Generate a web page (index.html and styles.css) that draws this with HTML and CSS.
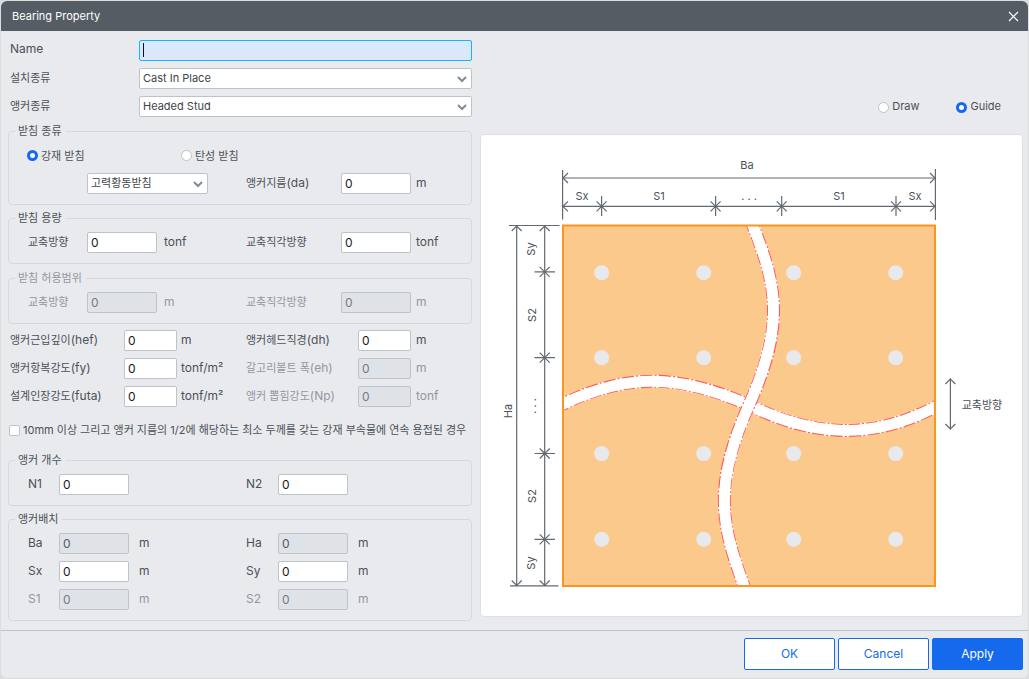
FILE: index.html
```html
<!DOCTYPE html>
<html lang="ko">
<head>
<meta charset="utf-8">
<title>Bearing Property</title>
<link rel="stylesheet" href="styles.css">
</head>
<body>
<form class="dialog">
  <header class="titlebar">
    <h1 class="title">Bearing Property</h1>
    <button class="close" type="button" aria-label="Close">
      <svg width="11" height="11" viewBox="0 0 11 11"><path d="M1 1l9 9M10 1l-9 9" fill="none" stroke="#fff" stroke-width="1.2"/></svg>
    </button>
  </header>

  <main class="content">
    <div class="form">
      <div class="rows top-rows">
        <label for="name">Name</label><input class="field name-field" id="name" type="text">
        <label class="ko" for="install">설치종류</label>
        <select class="field" id="install"><option>Cast In Place</option></select>
        <label class="ko" for="anchor">앵커종류</label>
        <select class="field" id="anchor"><option>Headed Stud</option></select>
      </div>

      <fieldset class="group">
        <legend class="ko">받침 종류</legend>
        <div class="radio-row">
          <label class="choice ko"><input type="radio" name="kind" checked><span>강재 받침</span></label>
          <label class="choice ko"><input type="radio" name="kind"><span>탄성 받침</span></label>
        </div>
        <div class="rows bearing-rows">
          <select class="field ko span-unit" aria-label="받침 종류"><option>고력황동받침</option></select>
          <label for="da"><span class="ko">앵커지름</span>(da)</label><input class="field" id="da" value="0"><span>m</span>
        </div>
      </fieldset>

      <fieldset class="group">
        <legend class="ko">받침 용량</legend>
        <div class="rows bearing-rows">
          <label class="ko" for="cap1">교축방향</label><input class="field" id="cap1" value="0"><span class="unit">tonf</span>
          <label class="ko" for="cap2">교축직각방향</label><input class="field" id="cap2" value="0"><span>tonf</span>
        </div>
      </fieldset>

      <fieldset class="group range-group" disabled>
        <legend class="ko">받침 허용범위</legend>
        <div class="rows bearing-rows">
          <label class="ko" for="rng1">교축방향</label><input class="field" id="rng1" value="0"><span class="unit">m</span>
          <label class="ko" for="rng2">교축직각방향</label><input class="field" id="rng2" value="0"><span>m</span>
        </div>
      </fieldset>

      <div class="rows strength-rows">
        <label for="hef"><span class="ko">앵커근입깊이</span>(hef)</label><input class="field" id="hef" value="0"><span class="unit">m</span>
        <label for="dh"><span class="ko">앵커헤드직경</span>(dh)</label><input class="field" id="dh" value="0"><span>m</span>
        <label for="fy"><span class="ko">앵커항복강도</span>(fy)</label><input class="field" id="fy" value="0"><span class="unit">tonf/m²</span>
        <label class="off" for="eh"><span class="ko">갈고리볼트 폭</span>(eh)</label><input class="field" id="eh" value="0" disabled><span class="off">m</span>
        <label for="futa"><span class="ko">설계인장강도</span>(futa)</label><input class="field" id="futa" value="0"><span class="unit">tonf/m²</span>
        <label class="off" for="np"><span class="ko">앵커 뽑힘강도</span>(Np)</label><input class="field" id="np" value="0" disabled><span class="off">tonf</span>
      </div>

      <label class="check"><input type="checkbox"><span>10mm <span class="ko">이상 그리고 앵커 지름의</span> 1/2<span class="ko">에 해당하는 최소 두께를 갖는 강재 부속물에 연속 용접된 경우</span></span></label>

      <fieldset class="group">
        <legend class="ko">앵커 개수</legend>
        <div class="rows anchor-rows">
          <label for="n1">N1</label><input class="field" id="n1" value="0"><span></span>
          <label for="n2">N2</label><input class="field" id="n2" value="0"><span></span>
        </div>
      </fieldset>

      <fieldset class="group">
        <legend class="ko">앵커배치</legend>
        <div class="rows anchor-rows">
          <label for="ba">Ba</label><input class="field computed" id="ba" value="0" readonly><span class="unit">m</span>
          <label for="ha">Ha</label><input class="field computed" id="ha" value="0" readonly><span class="unit">m</span>
          <label for="sx">Sx</label><input class="field" id="sx" value="0"><span class="unit">m</span>
          <label for="sy">Sy</label><input class="field" id="sy" value="0"><span class="unit">m</span>
          <label class="off" for="s1">S1</label><input class="field" id="s1" value="0" disabled><span class="unit off">m</span>
          <label class="off" for="s2">S2</label><input class="field" id="s2" value="0" disabled><span class="unit off">m</span>
        </div>
      </fieldset>
    </div>

    <section class="preview">
      <div class="view-switch">
        <label class="choice"><input type="radio" name="view"><span>Draw</span></label>
        <label class="choice"><input type="radio" name="view" checked><span>Guide</span></label>
      </div>
      <div class="panel">
        <svg class="diagram" viewBox="481 135 541 481" role="img" aria-label="Anchor layout guide">
          <defs>
            <clipPath id="plate"><rect x="563" y="225" width="372" height="361"/></clipPath>
            <path id="wave-h" d="M555 408L563 404C628 373 678 374 749 405C813 437 872 440 935 407L943 403"/>
            <path id="wave-v" d="M750 218L753 226C777 286 785 325 749 405C712 487 722 526 744 586L747 594"/>
            <path id="cross-x" d="M-5 -5L5 5M5 -5L-5 5"/>
            <path id="head" d="M5 -5L0 0L5 5"/>
          </defs>
          <rect x="563" y="225.5" width="372" height="360.5" fill="#fac98b"/>
          <g clip-path="url(#plate)" fill="none">
            <use href="#wave-h" stroke="#fff" stroke-width="13"/>
            <use href="#wave-h" stroke="#ff5a50" stroke-width="13" stroke-dasharray="12 2 2 2"/>
            <use href="#wave-h" stroke="#fff" stroke-width="11"/>
            <use href="#wave-v" stroke="#fff" stroke-width="13"/>
            <use href="#wave-v" stroke="#ff5a50" stroke-width="13" stroke-dasharray="12 2 2 2"/>
            <use href="#wave-v" stroke="#fff" stroke-width="11"/>
          </g>
          <rect x="563" y="225.5" width="372" height="360.5" fill="none" stroke="#fa961e" stroke-width="2"/>
          <g fill="#e8e9ed">
            <circle cx="601.7" cy="272.8" r="7.5"/><circle cx="703.7" cy="272.8" r="7.5"/><circle cx="793.7" cy="272.8" r="7.5"/><circle cx="895.7" cy="272.8" r="7.5"/>
            <circle cx="601.7" cy="357.7" r="7.5"/><circle cx="703.7" cy="357.7" r="7.5"/><circle cx="793.7" cy="357.7" r="7.5"/><circle cx="895.7" cy="357.7" r="7.5"/>
            <circle cx="601.7" cy="453.6" r="7.5"/><circle cx="703.7" cy="453.6" r="7.5"/><circle cx="793.7" cy="453.6" r="7.5"/><circle cx="895.7" cy="453.6" r="7.5"/>
            <circle cx="601.7" cy="539.3" r="7.5"/><circle cx="703.7" cy="539.3" r="7.5"/><circle cx="793.7" cy="539.3" r="7.5"/><circle cx="895.7" cy="539.3" r="7.5"/>
          </g>
          <g class="dims">
            <path d="M562.6 170V219.5M935.4 169V220M563 178H935M563 206.3H935"/>
            <path d="M601.6 196V216M715.6 196V216M781.7 196V216M896 196V216"/>
            <path d="M509 225.5H559.5M510 585.8H558.5M516.7 226V585.5M544.7 226V585.5"/>
            <path d="M534.5 271.8H555M534.5 357.7H555M534.5 453.5H555M534.5 539.3H555"/>
            <path d="M950.4 378.5V429.5"/>
            <use href="#cross-x" x="601.6" y="206.3"/><use href="#cross-x" x="715.6" y="206.3"/><use href="#cross-x" x="781.7" y="206.3"/><use href="#cross-x" x="896" y="206.3"/>
            <use href="#cross-x" x="544.7" y="271.8"/><use href="#cross-x" x="544.7" y="357.7"/><use href="#cross-x" x="544.7" y="453.5"/><use href="#cross-x" x="544.7" y="539.3"/>
            <use href="#head" x="563" y="178"/><use href="#head" x="563" y="206.3"/>
            <use href="#head" transform="translate(935 178) rotate(180)"/><use href="#head" transform="translate(935 206.3) rotate(180)"/>
            <use href="#head" transform="translate(516.7 226) rotate(90)"/><use href="#head" transform="translate(544.7 226) rotate(90)"/>
            <use href="#head" transform="translate(516.7 585.5) rotate(-90)"/><use href="#head" transform="translate(544.7 585.5) rotate(-90)"/>
            <use href="#head" transform="translate(950.4 379) rotate(90)"/><use href="#head" transform="translate(950.4 429) rotate(-90)"/>
          </g>
          <g class="dim-text">
            <text x="747" y="169">Ba</text>
            <text x="582" y="200">Sx</text><text x="659" y="200">S1</text><text x="749" y="200">. . .</text><text x="839" y="200">S1</text><text x="915" y="200">Sx</text>
            <text transform="translate(535 249) rotate(-90)">Sy</text>
            <text transform="translate(536 315) rotate(-90)">S2</text>
            <text transform="translate(536 406) rotate(-90)">. . .</text>
            <text transform="translate(536 496) rotate(-90)">S2</text>
            <text transform="translate(535 563) rotate(-90)">Sy</text>
            <text transform="translate(512 411) rotate(-90)">Ha</text>
            <text class="ko" x="982" y="409">교축방향</text>
          </g>
        </svg>
      </div>
    </section>
  </main>

  <footer class="actions">
    <button class="btn" type="button">OK</button>
    <button class="btn" type="button">Cancel</button>
    <button class="btn primary" type="button">Apply</button>
  </footer>
</form>
</body>
</html>
```
FILE: styles.css
```css
* { box-sizing: border-box; }

body {
  margin: 0;
  min-height: 100vh;
  padding: 1px;
  display: flex;
  background: #dcdddf;
  color: #4b5157;
  font: 12px/16px Inter, "Noto Sans CJK KR", sans-serif;
}

.ko { font-family: "Noto Sans CJK KR", sans-serif; font-size: 11px; }

.dialog {
  flex: 1;
  display: flex;
  flex-direction: column;
  background: #e9eaee;
  border-radius: 6px;
  overflow: hidden;
}

.titlebar {
  display: flex;
  align-items: center;
  justify-content: space-between;
  height: 30px;
  padding: 0 9px 0 11px;
  background: #565c63;
}
.title { margin: 0; font-size: 11px; font-weight: 400; color: #fff; }
.close { display: flex; padding: 0; border: 0; background: none; }

.content {
  flex: 1;
  display: grid;
  grid-template-columns: 464px 1fr;
  gap: 8px;
  padding: 9px 5px 9px 7px;
}

.form { display: flex; flex-direction: column; gap: 6px; }

.rows {
  display: grid;
  row-gap: 7px;
  grid-auto-rows: 21px;
  align-items: center;
  white-space: nowrap;
}
.rows label, .rows span { padding-bottom: 2px; }
.rows label.ko, .top-rows label { padding-bottom: 4px; }
.rows label > span { padding: 0; }

.top-rows { grid-template-columns: 129px 1fr; padding-left: 2px; margin-bottom: 1px; }
.bearing-rows { grid-template-columns: 59px 70px 89px 95px 70px 1fr; }
.strength-rows { grid-template-columns: 114px 53px 69px 112px 53px 1fr; padding-left: 2px; }
.anchor-rows { grid-template-columns: 31px 70px 117px 32px 70px 1fr; }

.bearing-rows .unit { padding-left: 7px; }
.strength-rows .unit { padding-left: 4px; }
.anchor-rows .unit { padding-left: 10px; }
.bearing-rows input + span:last-child,
.strength-rows span:nth-child(6n) { padding-left: 5px; }

.field {
  width: 100%;
  height: 21px;
  margin: 0;
  padding: 0 3px 1px;
  border: 1px solid #bcc3ca;
  border-radius: 2px;
  background-color: #fff;
  color: #17191c;
  font-family: Inter, "Noto Sans CJK KR", sans-serif;
  font-size: 12px;
  outline: 0;
}
.span-unit { grid-column: 2 / 4; width: 121px; }
select.field {
  appearance: none;
  color: #3e444a;
  font-size: 11px;
  background-image: url("data:image/svg+xml,%3Csvg xmlns='http://www.w3.org/2000/svg' width='10' height='7'%3E%3Cpath d='M1 1l4 4l4-4' fill='none' stroke='%23848b93' stroke-width='2'/%3E%3C/svg%3E");
  background-repeat: no-repeat;
  background-position: right 4px top 7px;
}
.name-field {
  border-color: #12b8f5;
  background: linear-gradient(#111, #111) 3px 2px / 1px 14px no-repeat #dbe8fb;
}
.field:disabled, .computed { background-color: #dfe2e7; color: #757b82; opacity: 1; }
.computed { color: #545a61; }
.off, .group:disabled { color: #92979e; }

.group {
  min-width: 0;
  margin: 0;
  padding: 7px 0 10px 19px;
  border: 1px solid #d4d7dc;
  border-radius: 4px;
}
.group legend { height: 14px; margin-left: -13px; padding: 0 4px 0 3px; line-height: 12px; }
.range-group { margin-top: 1px; }

.radio-row { display: grid; grid-template-columns: 154px 1fr; height: 21px; margin: 0 0 7px -1px; align-items: center; }
.choice { display: flex; align-items: center; gap: 3px; font-size: 11px; }
.choice span { padding-bottom: 2px; }
.choice input {
  appearance: none;
  width: 11px;
  height: 11px;
  margin: 0;
  border: 1px solid #bcc3ca;
  border-radius: 50%;
  background: #fff;
}
.choice input:checked { border: 3px solid #1569ed; }

.check { display: flex; align-items: center; gap: 3px; height: 34px; padding-left: 1px; font-size: 11px; white-space: nowrap; }
.check > span { padding-bottom: 2px; }
.check input {
  appearance: none;
  width: 11px;
  height: 11px;
  margin: 0;
  border: 1px solid #bcc3ca;
  border-radius: 2px;
  background: #fff;
}

.preview { display: flex; flex-direction: column; }
.view-switch { display: flex; justify-content: flex-end; gap: 37px; height: 94px; padding: 40px 22px 0 0; }
.panel { border: 1px solid #dde1e6; border-radius: 4px; background: #fff; }
.diagram { display: block; width: 100%; height: auto; }
.dims { fill: none; stroke: #636970; stroke-width: 1.2; }
.dim-text { fill: #4b5157; font-size: 11px; text-anchor: middle; }

.actions {
  display: flex;
  justify-content: flex-end;
  gap: 3px;
  padding: 7px 5px 8px;
  border-top: 1px solid #bcc3ca;
}
.btn {
  width: 91px;
  height: 32px;
  border: 1px solid #1569ed;
  border-radius: 2px;
  background: #fff;
  color: #1569ed;
  font: inherit;
}
.primary { background: #1569ed; color: #fff; }
```
